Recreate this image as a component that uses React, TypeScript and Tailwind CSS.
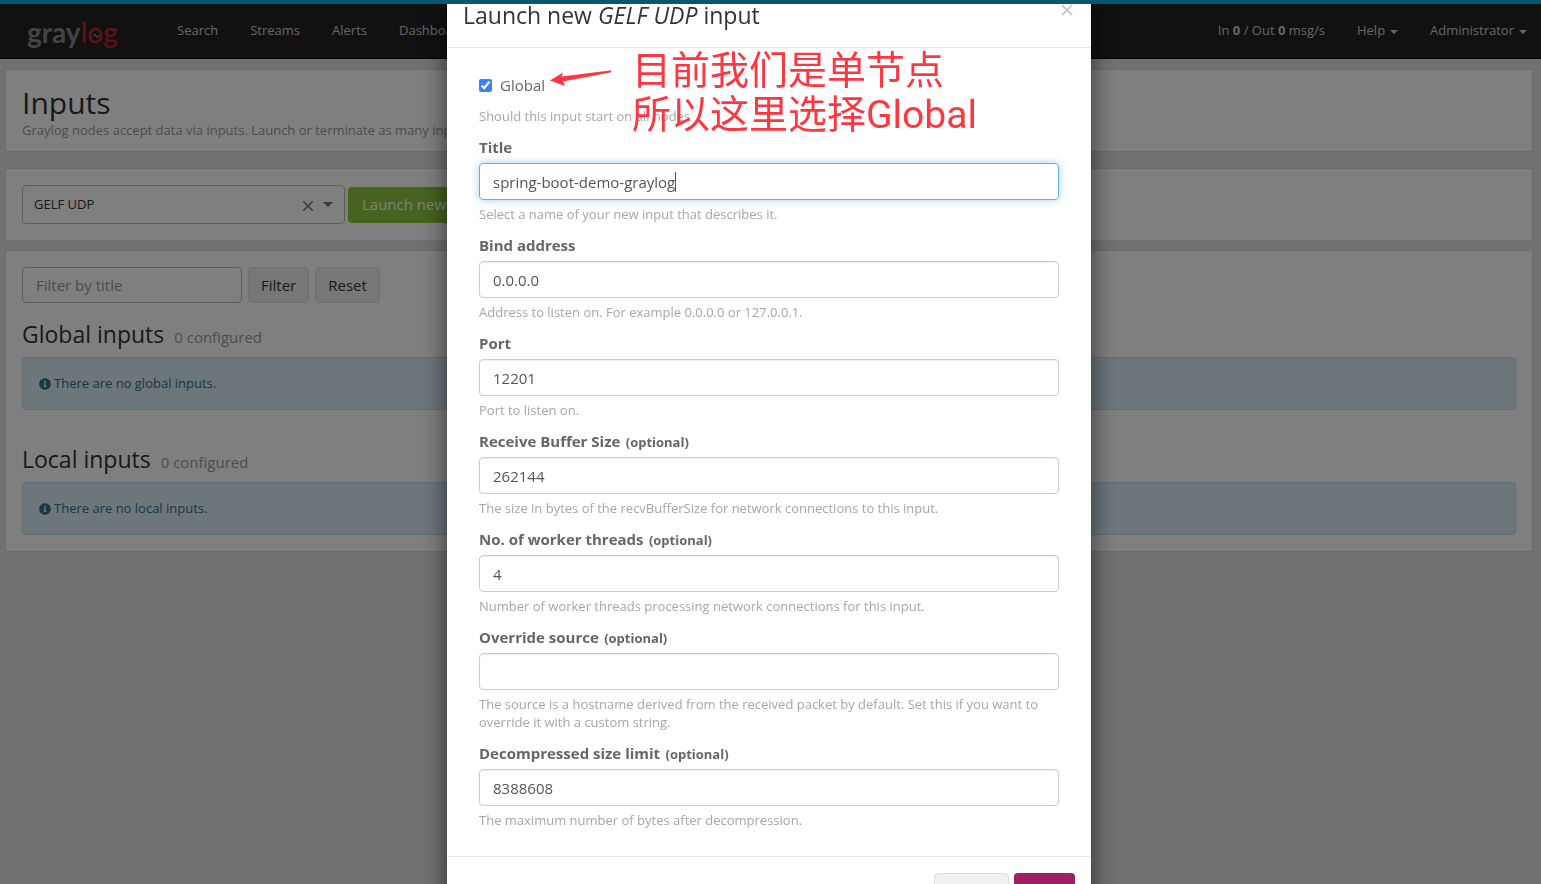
import { useState } from "react";
import { FaInfoCircle } from "react-icons/fa";

type Field = {
  id: string;
  label: string;
  value: string;
  help: string;
  optional?: boolean;
};

const navLinks = ["Search", "Streams", "Alerts", "Dashboards"];

const fields: Field[] = [
  {
    id: "title",
    label: "Title",
    value: "spring-boot-demo-graylog",
    help: "Select a name of your new input that describes it.",
  },
  {
    id: "bind_address",
    label: "Bind address",
    value: "0.0.0.0",
    help: "Address to listen on. For example 0.0.0.0 or 127.0.0.1.",
  },
  { id: "port", label: "Port", value: "12201", help: "Port to listen on." },
  {
    id: "recv_buffer_size",
    label: "Receive Buffer Size",
    value: "262144",
    help: "The size in bytes of the recvBufferSize for network connections to this input.",
    optional: true,
  },
  {
    id: "number_worker_threads",
    label: "No. of worker threads",
    value: "4",
    help: "Number of worker threads processing network connections for this input.",
    optional: true,
  },
  {
    id: "override_source",
    label: "Override source",
    value: "",
    help: "The source is a hostname derived from the received packet by default. Set this if you want to override it with a custom string.",
    optional: true,
  },
  {
    id: "decompress_size_limit",
    label: "Decompressed size limit",
    value: "8388608",
    help: "The maximum number of bytes after decompression.",
    optional: true,
  },
];

function Logo() {
  return (
    <a
      href="#"
      aria-label="graylog"
      className="flex w-[90px] items-center pt-0.5 font-['Lato',sans-serif] text-[28px] leading-8 font-bold text-[#87878b]"
    >
      <span>gray</span>
      <span className="font-medium text-[#c4222b]">
        l
        <span className="relative">
          o
          {/* pulse inside the o */}
          <svg
            viewBox="0 0 8 6"
            className="absolute top-[18px] left-[5px] h-1.5 w-2"
            fill="none"
            stroke="#87878b"
            strokeWidth="1"
          >
            <path d="M1 3h1L3.200 1l1.400 4L5.600 2.500l.4.5h1" />
          </svg>
        </span>
        g
      </span>
    </a>
  );
}

function Caret() {
  return (
    <svg viewBox="0 0 8 4" className="mt-0.5 ml-px h-1 w-2" fill="currentColor">
      <path d="M0 0h8L4 4z" />
    </svg>
  );
}

function Navbar() {
  return (
    <nav className="flex h-[55px] items-center justify-between border-b border-[#080808] bg-[#222] pr-[14px] pl-[27px] text-[13px] text-[#ccc]">
      <div className="flex items-center">
        <Logo />
        <ul className="ml-[60px] flex gap-8">
          {navLinks.map((link) => (
            <li key={link}>
              <a href="#">{link}</a>
            </li>
          ))}
        </ul>
      </div>
      <ul className="flex gap-8">
        <li>
          <a href="#">
            In <strong>0</strong> / Out <strong>0</strong> msg/s
          </a>
        </li>
        <li>
          <a href="#" className="flex items-center gap-1">
            Help <Caret />
          </a>
        </li>
        <li>
          <a href="#" className="flex items-center gap-1">
            Administrator <Caret />
          </a>
        </li>
      </ul>
    </nav>
  );
}

function InputTypeSelect() {
  const [type, setType] = useState("gelf-udp");

  return (
    <div className="flex h-[39px] w-[323px] items-center rounded border border-[#bbb] px-[11px] text-[13px] text-[#333]">
      <select
        aria-label="Select input"
        value={type}
        onChange={(e) => setType(e.target.value)}
        className="min-w-0 grow appearance-none outline-none"
      >
        <option value="" />
        <option value="gelf-udp">GELF UDP</option>
      </select>
      <button type="button" aria-label="Clear" onClick={() => setType("")} className="mt-0.5 mr-2.5">
        <svg viewBox="0 0 10 10" className="size-[10px] text-[#777]" stroke="currentColor" strokeWidth="1.500">
          <path d="m0 0 10 10M10 0 0 10" />
        </svg>
      </button>
      <svg viewBox="0 0 10 5" className="h-[5px] w-[10px] text-[#777]" fill="currentColor">
        <path d="M0 0h10L5 5z" />
      </svg>
    </div>
  );
}

function InputsList({ name, empty }: { name: string; empty: string }) {
  return (
    <section>
      <h2 className="text-[23px] leading-[30px] text-[#333]">
        {name}{" "}
        <small className="ml-1 text-[15px] leading-none text-[#999]">0 configured</small>
      </h2>
      <div className="mt-2 flex h-[53px] items-center gap-[3px] rounded border border-[#bcdfe5] bg-[#d9edf7] px-4 text-[13px] text-[#31708f]">
        <FaInfoCircle className="size-3" />
        {empty}
      </div>
    </section>
  );
}

function FormField({ field, focused }: { field: Field; focused: boolean }) {
  const [value, setValue] = useState(field.value);

  return (
    <div className="mb-[11px]">
      <label
        htmlFor={field.id}
        className="mb-[5px] block text-[15px] leading-[22px] font-bold text-[#666]"
      >
        {field.label}
        {field.optional && (
          <small className="ml-0.5 text-[13px] leading-none"> (optional)</small>
        )}
      </label>
      <div
        className={
          focused
            ? "flex h-[37px] items-center rounded border border-[#66afe9] px-[13px] pt-px shadow-[0_0_9px_rgba(102,175,233,0.6)]"
            : "flex h-[37px] items-center rounded border border-[#ccc] px-[13px] pt-px shadow-[inset_0_1px_1px_rgba(0,0,0,0.075)]"
        }
      >
        <input
          id={field.id}
          type="text"
          value={value}
          onChange={(e) => setValue(e.target.value)}
          className={
            focused
              ? "field-sizing-content border-r border-[#555] text-[15px] leading-5 text-[#555] outline-none"
              : "w-full text-[15px] leading-5 text-[#555] outline-none"
          }
        />
      </div>
      <p className="mt-[5px] text-[13px] leading-[18px] text-[#a6a6a6]">{field.help}</p>
    </div>
  );
}

function Annotation() {
  return (
    <div className="pointer-events-none absolute -top-[26px] left-[71px] flex text-[#fc3742]">
      <svg viewBox="0 0 62 20" className="mt-5 h-5 w-[62px]" fill="currentColor">
        <path d="M0 11.500 13 3.500 11.500 7.500 60 1.500a1 1 0 0 1 .4 2L13 12.500l2 4.500z" />
      </svg>
      <p className="ml-5 font-['Roboto','Noto_Sans_CJK_SC',sans-serif] text-[39px] leading-[44px] whitespace-nowrap">
        目前我们是单节点
        <br />
        所以这里选择Global
      </p>
    </div>
  );
}

function LaunchModal() {
  const [global, setGlobal] = useState(true);

  return (
    <div
      role="dialog"
      aria-label="Launch new GELF UDP input"
      className="mx-auto -mt-5 w-[644px] bg-white shadow-[0_6px_24px_rgba(0,0,0,0.6)]"
    >
      <div className="flex items-start justify-between border-b border-[#e5e5e5] px-4 py-4">
        <h4 className="text-[23px] leading-[31px] text-[#333]">
          Launch new <em>GELF UDP</em> input
        </h4>
        <button
          type="button"
          aria-label="Close"
          className="mt-0.5 flex size-4 items-center justify-center text-[#ccc]"
        >
          <svg viewBox="0 0 12 12" className="size-3" stroke="currentColor" strokeWidth="2.200">
            <path d="m1 1 10 10M11 1 1 11" />
          </svg>
        </button>
      </div>

      <div className="p-4">
        <div className="px-4 pt-[11px]">
          <div className="relative">
            <label className="flex items-center gap-2 text-[15px] leading-[21px] text-[#666]">
              <input
                type="checkbox"
                checked={global}
                onChange={(e) => setGlobal(e.target.checked)}
                className="size-[13px] accent-[#3b82f6]"
              />
              Global
            </label>
            <p className="mt-[11px] mb-[11px] text-[13px] leading-[18px] text-[#a6a6a6]">
              Should this input start on all nodes
            </p>
            <Annotation />
          </div>
          {fields.map((field, index) => (
            <FormField key={field.id} field={field} focused={index === 0} />
          ))}
        </div>
      </div>

      <div className="flex justify-end gap-[5px] border-t border-[#e5e5e5] p-4 text-[15px]">
        <button
          type="button"
          className="h-9 w-[75px] rounded border border-[#ddd] bg-[#f1f1f1] text-[#333]"
        >
          Cancel
        </button>
        <button type="button" className="h-9 w-[61px] rounded bg-[#9e1f63] text-white">
          Save
        </button>
      </div>
    </div>
  );
}

export default function App() {
  return (
    <div className="min-h-screen bg-[#e3e3e3] font-['Open_Sans',sans-serif]">
      <div className="h-1" />
      <Navbar />

      <main className="mt-[10px] mr-2 ml-[5px]">
        <div className="border border-[#d8d8d8] bg-white px-4 pt-[15px] pb-[11px]">
          <h1 className="text-[30px] leading-[36px] text-[#333]">Inputs</h1>
          <p className="text-[13px] leading-[19px] text-[#999]">
            Graylog nodes accept data via inputs. Launch or terminate as many inputs as you want here.
          </p>
        </div>

        <div className="mt-4 flex items-center gap-[3px] border border-[#d8d8d8] bg-white px-4 py-4">
          <InputTypeSelect />
          <button
            type="button"
            className="h-9 rounded bg-[#8cc63f] px-[14px] text-[15px] text-white"
          >
            Launch new input
          </button>
        </div>

        <div className="mt-[9px] border border-[#d8d8d8] bg-white p-4">
          <form className="mb-4 flex gap-1.5 text-[15px]">
            <input
              type="text"
              aria-label="Filter by title"
              placeholder="Filter by title"
              className="h-9 w-[220px] rounded border border-[#bbb] px-[13px] placeholder:text-[#999]"
            />
            <button
              type="button"
              className="h-9 rounded border border-[#e0e0e0] bg-[#efefef] px-3 text-[#333]"
            >
              Filter
            </button>
            <button
              type="button"
              className="h-9 rounded border border-[#e0e0e0] bg-[#efefef] px-3 text-[#333]"
            >
              Reset
            </button>
          </form>
          <InputsList name="Global inputs" empty="There are no global inputs." />
          <div className="h-[34px]" />
          <InputsList name="Local inputs" empty="There are no local inputs." />
        </div>
      </main>

      <div className="fixed inset-0 bg-black/50" />
      <div className="fixed inset-x-0 top-1 bottom-0 overflow-hidden pr-[3px]">
        <LaunchModal />
      </div>
      <div className="fixed inset-x-0 top-0 h-1 bg-[#03596e]" />
    </div>
  );
}
